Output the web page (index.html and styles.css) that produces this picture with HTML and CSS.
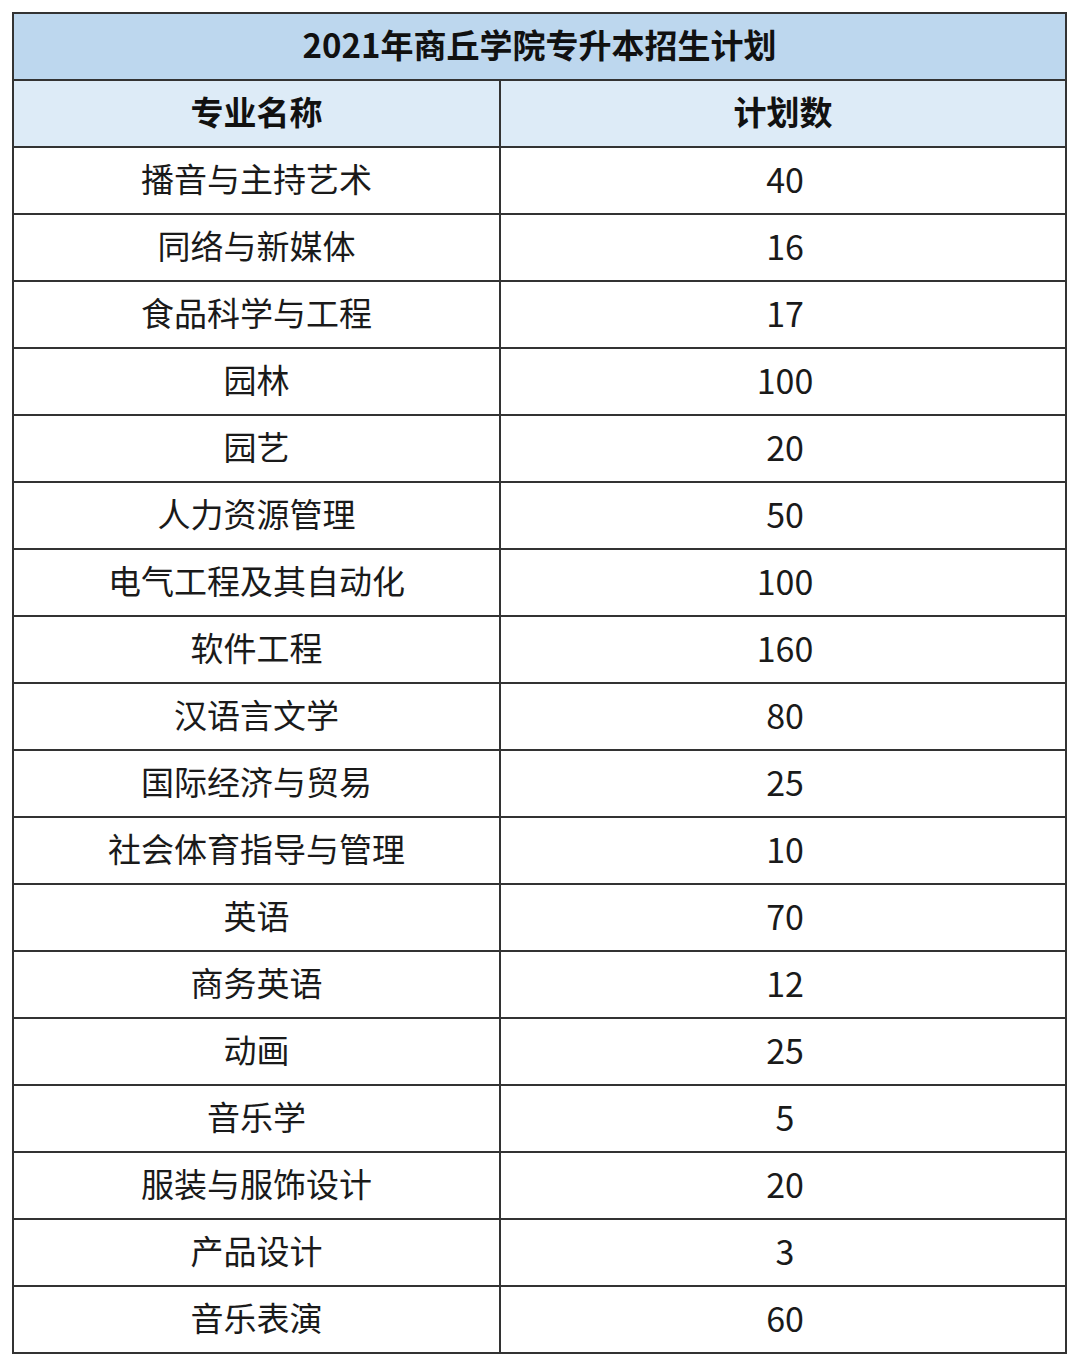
FILE: index.html
```html
<!DOCTYPE html>
<html lang="zh-CN">
<head>
<meta charset="utf-8">
<title>2021年商丘学院专升本招生计划</title>
<link rel="stylesheet" href="styles.css">
</head>
<body>
<div class="sheet">
  <div class="cell title">2021年商丘学院专升本招生计划</div>
  <div class="cell head">专业名称</div>
  <div class="cell head">计划数</div>
  <div class="cell name">播音与主持艺术</div><div class="cell num">40</div>
  <div class="cell name">同络与新媒体</div><div class="cell num">16</div>
  <div class="cell name">食品科学与工程</div><div class="cell num">17</div>
  <div class="cell name">园林</div><div class="cell num">100</div>
  <div class="cell name">园艺</div><div class="cell num">20</div>
  <div class="cell name">人力资源管理</div><div class="cell num">50</div>
  <div class="cell name">电气工程及其自动化</div><div class="cell num">100</div>
  <div class="cell name">软件工程</div><div class="cell num">160</div>
  <div class="cell name">汉语言文学</div><div class="cell num">80</div>
  <div class="cell name">国际经济与贸易</div><div class="cell num">25</div>
  <div class="cell name">社会体育指导与管理</div><div class="cell num">10</div>
  <div class="cell name">英语</div><div class="cell num">70</div>
  <div class="cell name">商务英语</div><div class="cell num">12</div>
  <div class="cell name">动画</div><div class="cell num">25</div>
  <div class="cell name">音乐学</div><div class="cell num">5</div>
  <div class="cell name">服装与服饰设计</div><div class="cell num">20</div>
  <div class="cell name">产品设计</div><div class="cell num">3</div>
  <div class="cell name">音乐表演</div><div class="cell num">60</div>
</div>
</body>
</html>
```

FILE: styles.css
```css
html, body {
  margin: 0;
  padding: 0;
  background: #ffffff;
}

body {
  padding: 12px 0 0 12px;
  font-family: "Noto Sans CJK SC", "Noto Sans", sans-serif;
  color: #1a1a1a;
}

.sheet {
  display: grid;
  grid-template-columns: 487px 566px;
  grid-auto-rows: 67px;
  width: 1055px;
  box-sizing: border-box;
  border-top: 2px solid #333333;
  border-left: 2px solid #333333;
}

.cell {
  box-sizing: border-box;
  border-right: 2px solid #333333;
  border-bottom: 2px solid #333333;
  display: flex;
  align-items: center;
  justify-content: center;
  font-size: 33px;
  line-height: 1;
  padding-bottom: 4px;
}

.title {
  grid-column: 1 / 3;
  background: #bdd7ee;
  font-weight: 700;
  color: #111111;
}

.head {
  background: #ddebf7;
  font-weight: 700;
  color: #111111;
}

.num {
  font-size: 34px;
  padding-left: 4px;
}
```
